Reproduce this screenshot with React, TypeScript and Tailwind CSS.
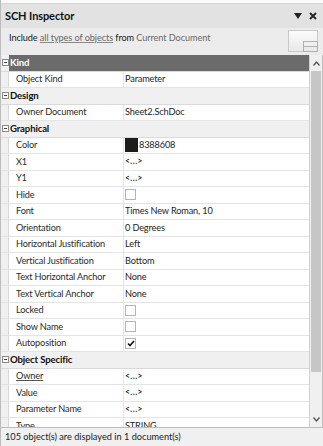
import * as React from "react";

type Row =
  | { kind: "section"; label: string; selected?: boolean }
  | { kind: "prop"; label: string; value?: string; type?: "text" | "dots" | "check" | "checked" | "color"; underline?: boolean };

const rows: Row[] = [
  { kind: "section", label: "Kind", selected: true },
  { kind: "prop", label: "Object Kind", value: "Parameter" },
  { kind: "section", label: "Design" },
  { kind: "prop", label: "Owner Document", value: "Sheet2.SchDoc" },
  { kind: "section", label: "Graphical" },
  { kind: "prop", label: "Color", value: "8388608", type: "color" },
  { kind: "prop", label: "X1", type: "dots" },
  { kind: "prop", label: "Y1", type: "dots" },
  { kind: "prop", label: "Hide", type: "check" },
  { kind: "prop", label: "Font", value: "Times New Roman, 10" },
  { kind: "prop", label: "Orientation", value: "0 Degrees" },
  { kind: "prop", label: "Horizontal Justification", value: "Left" },
  { kind: "prop", label: "Vertical Justification", value: "Bottom" },
  { kind: "prop", label: "Text Horizontal Anchor", value: "None" },
  { kind: "prop", label: "Text Vertical Anchor", value: "None" },
  { kind: "prop", label: "Locked", type: "check" },
  { kind: "prop", label: "Show Name", type: "check" },
  { kind: "prop", label: "Autoposition", type: "checked" },
  { kind: "section", label: "Object Specific" },
  { kind: "prop", label: "Owner", type: "dots", underline: true },
  { kind: "prop", label: "Value", type: "dots" },
  { kind: "prop", label: "Parameter Name", type: "dots" },
  { kind: "prop", label: "Type", value: "STRING" },
];

function Collapse() {
  return (
    <span className="flex h-[7px] w-[7px] items-center justify-center border border-[#8a8a8a] bg-white">
      <span className="h-px w-[3px] bg-[#444]" />
    </span>
  );
}

function Value({ row }: { row: Extract<Row, { kind: "prop" }> }) {
  if (row.type === "dots") return <span className="text-[8.5px] font-bold tracking-[0.4px] text-[#333]">&lt;...&gt;</span>;
  if (row.type === "check" || row.type === "checked")
    return (
      <span className="flex h-[11px] w-[11px] items-center justify-center border border-[#b5b5b5] bg-white">
        {row.type === "checked" && (
          <svg width="8" height="7" viewBox="0 0 8 7">
            <path d="M1 3.5 L3 5.5 L7 1" fill="none" stroke="#111" strokeWidth="1.6" />
          </svg>
        )}
      </span>
    );
  if (row.type === "color")
    return (
      <span className="flex items-center">
        <span className="mr-[1px] h-[14px] w-[13px] bg-[#1c1c1c]" />
        <span>{row.value}</span>
      </span>
    );
  return <span>{row.value}</span>;
}

export default function App() {
  return (
    <div
      className="flex h-[446px] w-[323px] flex-col overflow-hidden border-l border-[#bcbcbc] bg-[#f0f0f0] text-[#1e1e1e]"
      style={{ fontFamily: "Lato, 'Open Sans', sans-serif" }}
    >
      <div className="h-[4px] shrink-0 border-b border-[#d4d4d4] bg-[#fafafa]" />
      <div className="flex h-[24px] shrink-0 items-center bg-[#e2e2e2] pl-[4px] pr-[6px]">
        <span className="text-[11px] font-bold tracking-[-0.1px] text-[#111]">SCH Inspector</span>
        <span className="ml-auto flex items-center gap-[7px]">
          <svg width="8" height="6" viewBox="0 0 8 6">
            <path d="M0 0 H8 L4 6 Z" fill="#222" />
          </svg>
          <svg width="8" height="8" viewBox="0 0 8 8">
            <path d="M1 1 L7 7 M7 1 L1 7" stroke="#222" strokeWidth="1.8" />
          </svg>
        </span>
      </div>
      <div className="flex h-[27px] shrink-0 items-start bg-[#ececec] pl-[8px] pr-[5px] pt-[1px]">
        <span className="mt-[2px] text-[9.2px] tracking-[-0.1px] text-[#222]">
          Include <span className="text-[#666] underline decoration-[#888]">all types of objects</span> from{" "}
          <span className="text-[#6a6a6a]">Current Document</span>
        </span>
        <div className="relative ml-auto mt-[1px] h-[22px] w-[30px] border border-[#c9c9c9] bg-gradient-to-b from-[#fbfbfb] to-[#e9e9e9]">
          <div className="absolute bottom-[-1px] right-[-1px] flex h-[11px] w-[15px] flex-col border border-[#b0b0b0]">
            <div className="flex-1 border-b border-[#b0b0b0]" />
            <div className="flex-1" />
          </div>
        </div>
      </div>

      <div className="flex min-h-0 flex-1">
        <div className="min-w-0 flex-1 overflow-hidden bg-white text-[9.2px] tracking-[-0.15px]">
          {rows.map((row, i) =>
            row.kind === "section" ? (
              <div key={i} className="flex h-[16.5px] items-center border-b border-[#dadada] bg-[#f0f0f0]">
                <span className="flex w-[8px] shrink-0 justify-center">
                  <Collapse />
                </span>
                <span
                  className={
                    row.selected
                      ? "flex h-full flex-1 items-center bg-[#6b6b6b] pl-px text-[9.6px] font-bold text-white"
                      : "flex h-full flex-1 items-center pl-px text-[9.6px] font-bold text-[#111]"
                  }
                >
                  {row.label}
                </span>
              </div>
            ) : (
              <div key={i} className="flex h-[16.5px] items-center border-b border-[#e4e4e4]">
                <span className="h-full w-[8px] shrink-0 border-r border-[#d8d8d8] bg-[#f0f0f0]" />
                <span
                  className={
                    "flex h-full w-[115px] shrink-0 items-center border-r border-[#e4e4e4] pl-[7px] text-[#2a2a2a]" +
                    (row.underline ? " underline decoration-[#555]" : "")
                  }
                >
                  {row.label}
                </span>
                <span className="flex h-full flex-1 items-center pl-[1px] text-[#1e1e1e]">
                  <Value row={row} />
                </span>
              </div>
            ),
          )}
        </div>
        <div className="flex w-[14px] shrink-0 flex-col border-l border-[#d0d0d0] border-r border-r-[#bdbdbd] bg-[#f0f0f0]">
          <div className="flex h-[16px] items-center justify-center">
            <svg width="7" height="5" viewBox="0 0 7 5">
              <path d="M0.5 4.5 L3.5 1 L6.5 4.5" fill="none" stroke="#555" strokeWidth="1.3" />
            </svg>
          </div>
          <div className="mx-[1px] h-[301px] bg-[#c6c6c6]" />
          <div className="flex-1" />
          <div className="flex h-[16px] items-center justify-center">
            <svg width="7" height="5" viewBox="0 0 7 5">
              <path d="M0.5 0.5 L3.5 4 L6.5 0.5" fill="none" stroke="#555" strokeWidth="1.3" />
            </svg>
          </div>
        </div>
      </div>

      <div className="flex h-[19px] shrink-0 items-center border-t border-[#bdbdbd] bg-[#f0f0f0] pl-[4px] text-[9.2px] text-[#222]">
        105 object(s) are displayed in 1 document(s)
      </div>
    </div>
  );
}
